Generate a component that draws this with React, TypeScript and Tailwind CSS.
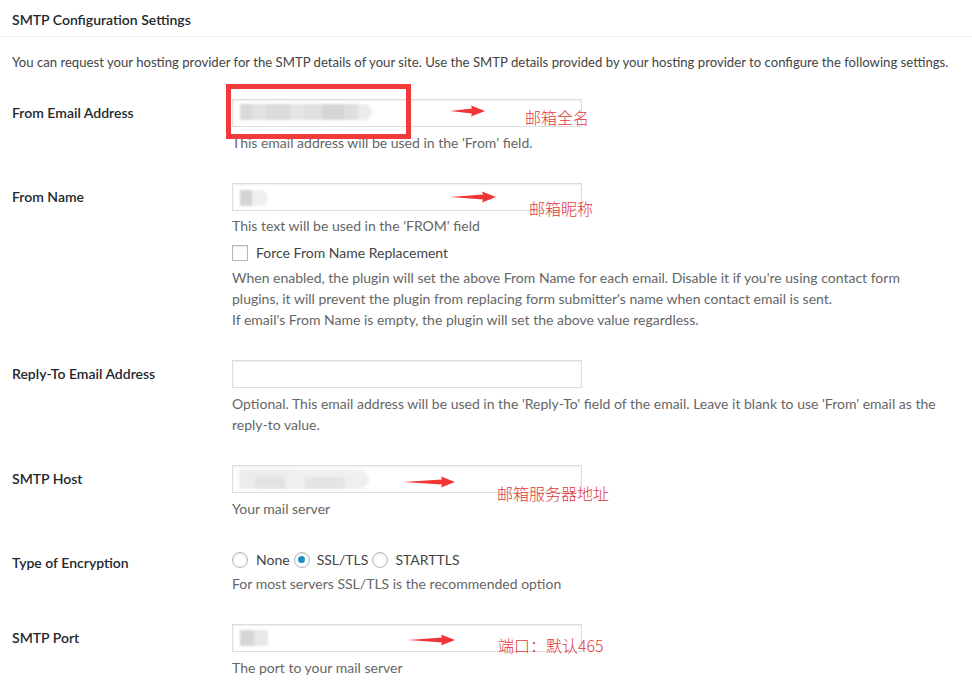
import React from "react";

const Arrow = ({ className, width }: { className: string; width: number }) => (
  <svg className={className} width={width} height="12" viewBox={`0 0 ${width} 12`}>
    <path
      d={`M0 6 L${width - 13} 3.6 L${width - 14} 0.5 L${width} 6 L${width - 14} 11.5 L${width - 13} 8.4 Z`}
      fill="#ef3535"
    />
  </svg>
);

const Note = ({ className, children }: { className: string; children: React.ReactNode }) => (
  <span
    className={`absolute whitespace-nowrap text-[16px] leading-[22px] text-[#e2373b] font-['Noto_Sans_CJK_SC',sans-serif] font-light ${className}`}
  >
    {children}
  </span>
);

const Field = ({ children }: { children?: React.ReactNode }) => (
  <div className="relative w-[350px] h-[28px] border border-[#dddddd] bg-white shadow-[inset_0_1px_2px_rgba(0,0,0,0.07)] overflow-hidden">
    {children}
  </div>
);

const Row = ({ label, children }: { label: string; children: React.ReactNode }) => (
  <div className="flex px-3">
    <div className="w-[220px] shrink-0 pt-[20px] leading-[17px] text-[14px] font-semibold text-[#23282d]">{label}</div>
    <div className="relative flex-1 py-[15px] text-[14px]">{children}</div>
  </div>
);

const Help = ({ children, className = "" }: { children: React.ReactNode; className?: string }) => (
  <p className={`leading-[21px] text-[#666] whitespace-nowrap ${className}`}>{children}</p>
);

const Radio = ({ checked }: { checked?: boolean }) => (
  <span className="inline-flex w-[16px] h-[16px] rounded-full border border-[#b4b9be] bg-white items-center justify-center shadow-[inset_0_1px_2px_rgba(0,0,0,0.1)]">
    {checked && <span className="w-[7px] h-[7px] rounded-full bg-[#1e8cbe]" />}
  </span>
);

export default function App() {
  return (
    <div className="min-h-[699px] w-full bg-white text-[13px] text-[#444] font-['Lato','Liberation_Sans',sans-serif]">
      <h3 className="px-3 pt-[11px] pb-[8px] leading-[17px] text-[14px] border-b border-[#eeeeee] font-semibold text-[#23282d]">
        SMTP Configuration Settings
      </h3>
      <p className="px-3 mt-[15px] leading-[20px] text-[13.15px] whitespace-nowrap">
        You can request your hosting provider for the SMTP details of your site. Use the SMTP details provided by your
        hosting provider to configure the following settings.
      </p>

      <div className="mt-[12px]">
        <Row label="From Email Address">
          <Field>
            <div className="absolute left-[7px] top-[4px] flex h-[16px] blur-[1px]">
              <span className="w-[12px] bg-[#d8d8d8]" />
              <span className="w-[14px] bg-[#e2e2e2]" />
              <span className="w-[24px] bg-[#dadada]" />
              <span className="w-[14px] bg-[#e6e6e6]" />
              <span className="w-[18px] bg-[#e0e0e0]" />
              <span className="w-[22px] bg-[#d6d6d6]" />
              <span className="w-[14px] bg-[#dedede]" />
              <span className="w-[14px] bg-[#ececec] rounded-r-full" />
            </div>
          </Field>
          <Help className="mt-[5px]">This email address will be used in the 'From' field.</Help>
          <div className="absolute -left-[6px] top-0 w-[185px] h-[55px] border-[5px] border-[#f23a3a]" />
          <Arrow className="absolute left-[218px] top-[21px]" width={35} />
          <Note className="left-[293px] top-[22px]">邮箱全名</Note>
        </Row>

        <Row label="From Name">
          <Field>
            <div className="absolute left-[7px] top-[6px] flex h-[16px] blur-[1px]">
              <span className="w-[12px] bg-[#d4d4d4]" />
              <span className="w-[16px] bg-[#efefef] rounded-r-full" />
            </div>
          </Field>
          <Help className="mt-[4px]">This text will be used in the 'FROM' field</Help>
          <label className="mt-[6px] flex items-center h-[21px] gap-[8px]">
            <span className="w-[16px] h-[16px] border border-[#b4b9be] bg-white shadow-[inset_0_1px_2px_rgba(0,0,0,0.1)]" />
            <span className="text-[#444]">Force From Name Replacement</span>
          </label>
          <Help className="mt-[4px]">
            When enabled, the plugin will set the above From Name for each email. Disable it if you're using contact form
            <br />
            plugins, it will prevent the plugin from replacing form submitter's name when contact email is sent.
            <br />
            If email's From Name is empty, the plugin will set the above value regardless.
          </Help>
          <Arrow className="absolute left-[218px] top-[23px]" width={46} />
          <Note className="left-[297px] top-[29px]">邮箱昵称</Note>
        </Row>

        <Row label="Reply-To Email Address">
          <Field />
          <Help className="mt-[5px]">
            Optional. This email address will be used in the 'Reply-To' field of the email. Leave it blank to use 'From'
            email as the
            <br />
            reply-to value.
          </Help>
        </Row>

        <Row label="SMTP Host">
          <Field>
            <div className="absolute left-[6px] top-[3px] flex flex-col h-[20px] w-[130px] blur-[1.5px] rounded-r-full overflow-hidden">
              <div className="flex h-[8px]">
                <span className="w-[50px] bg-[#ececec]" />
                <span className="w-[80px] bg-[#f0f0f0]" />
              </div>
              <div className="flex h-[12px]">
                <span className="w-[16px] bg-[#ededed]" />
                <span className="w-[30px] bg-[#e2e2e2]" />
                <span className="w-[20px] bg-[#eeeeee]" />
                <span className="w-[40px] bg-[#e4e4e4]" />
                <span className="w-[24px] bg-[#eeeeee]" />
              </div>
            </div>
          </Field>
          <Help className="mt-[5px]">Your mail server</Help>
          <Arrow className="absolute left-[171px] top-[26px]" width={52} />
          <Note className="left-[265px] top-[32px]">邮箱服务器地址</Note>
        </Row>

        <Row label="Type of Encryption">
          <div className="flex items-center h-[21px] text-[#444]">
            <Radio />
            <span className="ml-[8px] mr-[4px]">None</span>
            <Radio checked />
            <span className="ml-[7px] mr-[4px]">SSL/TLS</span>
            <Radio />
            <span className="ml-[7px]">STARTTLS</span>
          </div>
          <Help className="mt-[3px]">For most servers SSL/TLS is the recommended option</Help>
        </Row>

        <Row label="SMTP Port">
          <Field>
            <div className="absolute left-[7px] top-[5px] flex h-[16px] blur-[0.8px]">
              <span className="w-[14px] bg-[#d6d6d6]" />
              <span className="w-[14px] bg-[#e8e8e8]" />
            </div>
          </Field>
          <Help className="mt-[5px]">The port to your mail server</Help>
          <Arrow className="absolute left-[176px] top-[25px]" width={47} />
          <Note className="left-[266px] top-[25px]">端口：默认465</Note>
        </Row>
      </div>
    </div>
  );
}
